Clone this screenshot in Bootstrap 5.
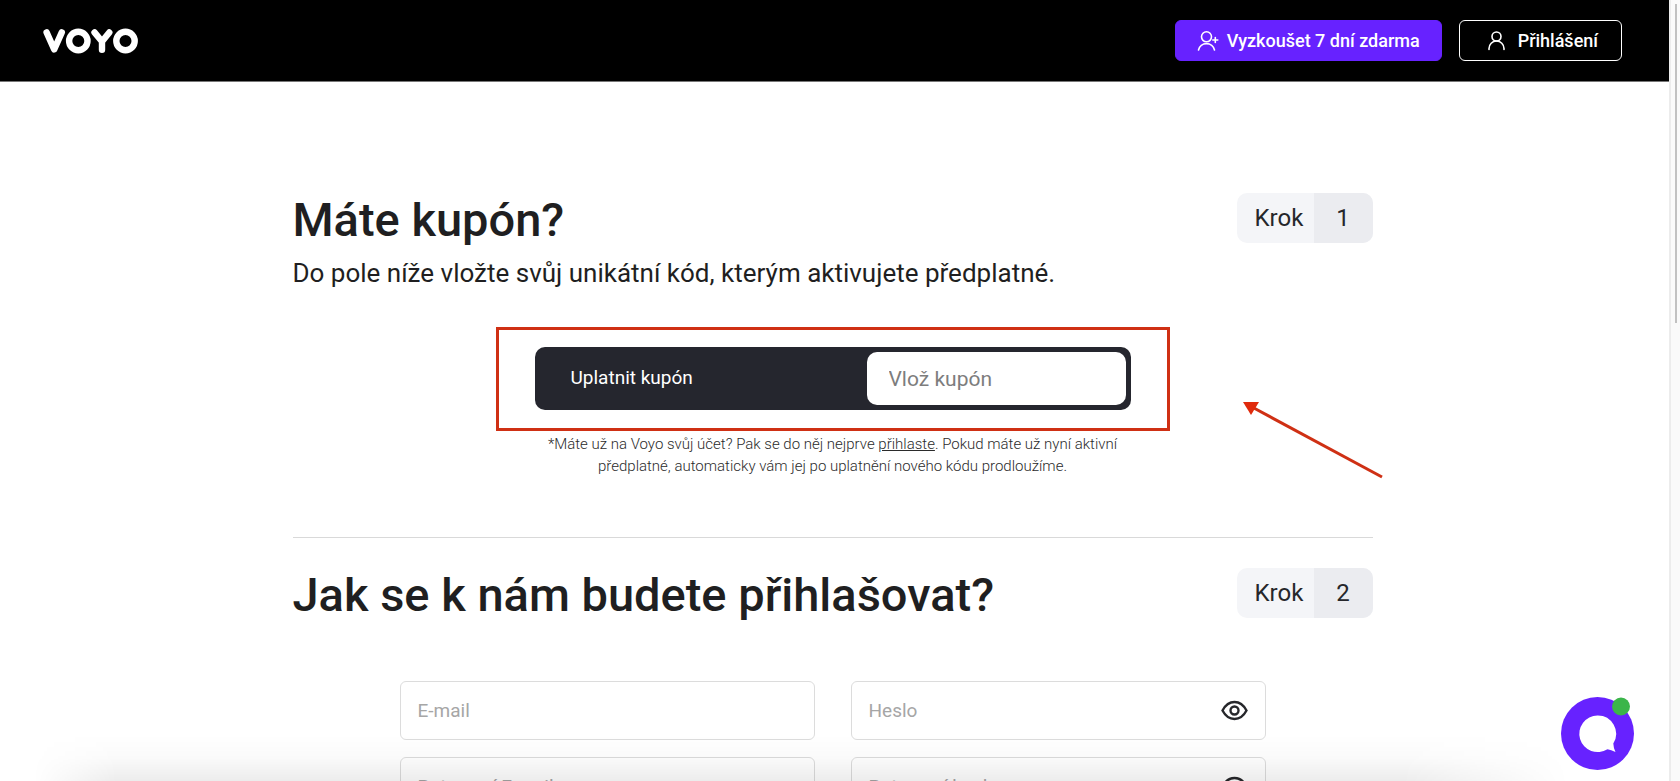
<!DOCTYPE html>
<html lang="cs">
<head>
<meta charset="utf-8">
<meta name="viewport" content="width=device-width, initial-scale=1">
<title>Voyo – Uplatnit kupón</title>
<link href="https://cdn.jsdelivr.net/npm/bootstrap@5.3.0/dist/css/bootstrap.min.css" rel="stylesheet">
<style>
  body { font-family: Roboto, "Liberation Sans", sans-serif; color: #1f1f21; background: #fff; }
  .page-pane { min-width: 0; }
  .scroll-rail { width: 11px; background: #fafafa; border-left: 2px solid #ececec; }
  .scroll-thumb { width: 2px; height: 41%; background: #c1c1c1; }
  .site-header { background: #000; padding: 20px 47px 20px 43px; border-bottom: 1px solid #777; }
  .header-btn { height: 41px; font-size: 18px; line-height: 24px; font-weight: 500; border-radius: 6px; color: #fff; }
  .header-actions { gap: 17px; }
  .btn-trial { background: #6722ff; border-color: #6722ff; padding: 0 21px; gap: 8px; }
  .btn-login { border-color: #fff; padding: 0 23px 0 27px; gap: 11px; }
  .content { max-width: 1080px; padding-top: 111px; }
  h1, h2 { font-size: 47px; line-height: 53px; font-weight: 500; margin: 0; }
  .lead-line { font-size: 26px; line-height: 36px; margin: 9px 0 0; }
  .step { font-size: 24px; line-height: 50px; border-radius: 10px; background: #f4f5f8; color: #26272b; }
  .step-name { width: 77px; padding-left: 18px; }
  .step-no { width: 59px; background: #ebecf0; }
  .callout-frame { width: 674px; border: 3px solid #cf3014; padding: 17px 36px 18px; margin-top: 36px; }
  .coupon { background: #25262e; border-radius: 10px; height: 63px; padding: 5px; }
  .coupon label { color: #fff; font-size: 19px; padding-left: 31px; }
  .coupon .form-control { width: 259px; height: 53px; border: 0; border-radius: 10px; font-size: 21px; padding: 0 22px; }
  .coupon .form-control::placeholder { color: #7d7d7d; }
  .note { font-size: 15px; line-height: 22px; font-weight: 300; width: 600px; margin: 2px 0 0; color: #2b2b2b; }
  .note a { color: inherit; }
  .arrow { top: 208px; right: -11px; width: 142px; height: 78px; }
  .rule { height: 1px; background: #d9d9d9; margin: 60px 0 30px; }
  .account { width: 866px; margin-top: 60px; gap: 17px; }
  .account-row { gap: 36px; }
  .account .form-control { height: 59px; border: 1px solid #dcdcdc; border-radius: 6px; font-size: 19px; padding: 0 17px; background: transparent; }
  .account .form-control::placeholder { color: #a6a6a6; }
  .eye-btn { top: 16px; right: 18px; width: 27px; height: 27px; color: #26272b; }
  .bottom-shade { height: 46px; background: linear-gradient(rgba(0,0,0,0), rgba(0,0,0,.02) 50%, rgba(0,0,0,.075)); -webkit-mask-image: linear-gradient(90deg, transparent 2%, #000 7%, #000 84%, transparent 94%); mask-image: linear-gradient(90deg, transparent 2%, #000 7%, #000 84%, transparent 94%); pointer-events: none; }
  .chat { right: 35px; bottom: 11px; width: 73px; height: 73px; }
</style>
</head>
<body>
<div class="d-flex vh-100 overflow-hidden">
  <div class="page-pane flex-grow-1 position-relative overflow-hidden">
    <header class="site-header d-flex justify-content-between align-items-center">
      <a href="#" aria-label="Voyo" class="d-flex">
        <svg width="95" height="26" viewBox="0 0 95 26" fill="none" stroke="#fff" stroke-width="6.4" stroke-linecap="round" stroke-linejoin="round">
          <path d="M3.6 4.4 11.2 21.4 18.8 4.4"/><circle cx="35.3" cy="13" r="9.2"/>
          <path d="M51.5 4.4 59 13.5 66.3 4.4M59 13.5V21.8"/><circle cx="82.5" cy="13" r="9.2"/>
        </svg>
      </a>
      <div class="header-actions d-flex">
        <button type="button" class="btn header-btn btn-trial d-flex align-items-center">
          <svg width="22" height="20" viewBox="0 0 22 20" fill="none" stroke="#fff" stroke-width="1.6" stroke-linecap="round"><circle cx="9.5" cy="5.8" r="5"/><path d="M1.5 19a8.2 8.2 0 0 1 16 0M15.8 9h5M18.3 6.500v5"/></svg>
          Vyzkoušet 7 dní zdarma
        </button>
        <button type="button" class="btn header-btn btn-login d-flex align-items-center">
          <svg width="20" height="20" viewBox="0 0 20 20" fill="none" stroke="#fff" stroke-width="1.6" stroke-linecap="round"><circle cx="9.5" cy="5.5" r="4.5"/><path d="M2 18.500v-1a7.500 7.500 0 0 1 15 0v1"/></svg>
          Přihlášení
        </button>
      </div>
    </header>

    <div class="pe-1">
    <main class="content mx-auto">
      <section class="position-relative">
        <div class="d-flex justify-content-between align-items-start">
          <div><h1>Máte kupón?</h1><p class="lead-line">Do pole níže vložte svůj unikátní kód, kterým aktivujete předplatné.</p></div>
          <div class="step d-flex overflow-hidden"><span class="step-name">Krok</span><span class="step-no text-center">1</span></div>
        </div>
        <div class="callout-frame mx-auto">
          <div class="coupon d-flex justify-content-between align-items-center">
            <label for="coupon">Uplatnit kupón</label>
            <input id="coupon" type="text" class="form-control" placeholder="Vlož kupón">
          </div>
        </div>
        <p class="note mx-auto text-center">*Máte už na Voyo svůj účet? Pak se do něj nejprve <a href="#">přihlaste</a>. Pokud máte už nyní aktivní předplatné, automaticky vám jej po uplatnění nového kódu prodloužíme.</p>
        <svg class="arrow position-absolute" viewBox="0 0 142 78" aria-hidden="true"><path d="M10 6 140 76" stroke="#cf3014" stroke-width="3"/><path d="M1 1H17L9 14Z" fill="#e02a0c"/></svg>
      </section>
      <div class="rule"></div>
      <section>
        <div class="d-flex justify-content-between align-items-start">
          <h2>Jak se k nám budete přihlašovat?</h2>
          <div class="step d-flex overflow-hidden"><span class="step-name">Krok</span><span class="step-no text-center">2</span></div>
        </div>
        <form class="account d-flex flex-column mx-auto">
          <div class="d-flex account-row">
            <div class="flex-fill"><input type="email" class="form-control" placeholder="E-mail" aria-label="E-mail"></div>
            <div class="flex-fill position-relative"><input type="password" class="form-control" placeholder="Heslo" aria-label="Heslo">
              <button type="button" class="eye-btn btn p-0 border-0 position-absolute d-flex" aria-label="Zobrazit heslo"><svg width="27" height="27" viewBox="0 0 27 27" fill="none" stroke="currentColor" stroke-width="2.4"><path d="M1.500 13.500Q6 5 13.500 5T25.500 13.500Q21 22 13.500 22T1.500 13.500Z"/><circle cx="13.500" cy="13.500" r="4"/></svg></button></div>
          </div>
          <div class="d-flex account-row">
            <div class="flex-fill"><input type="email" class="form-control" placeholder="Potvrzení E-mailu" aria-label="Potvrzení E-mailu"></div>
            <div class="flex-fill position-relative"><input type="password" class="form-control" placeholder="Potvrzení hesla" aria-label="Potvrzení hesla">
              <button type="button" class="eye-btn btn p-0 border-0 position-absolute d-flex" aria-label="Zobrazit heslo"><svg width="27" height="27" viewBox="0 0 27 27" fill="none" stroke="currentColor" stroke-width="2.4"><path d="M1.500 13.500Q6 5 13.500 5T25.500 13.500Q21 22 13.500 22T1.500 13.500Z"/><circle cx="13.500" cy="13.500" r="4"/></svg></button></div>
          </div>
        </form>
      </section>
    </main>
    </div>
    <div class="bottom-shade position-absolute bottom-0 start-0 end-0"></div>
    <button type="button" class="chat btn p-0 border-0 position-absolute" aria-label="Otevřít chat">
      <svg class="d-block" width="73" height="73" viewBox="0 0 73 73"><circle cx="36.5" cy="36.5" r="36.5" fill="#6722ff"/><path d="M36.500 18.500a18.300 18.300 0 1 0 10 33.700Q50 53 54.500 55 52.500 51 52.300 46.500A18.300 18.300 0 0 0 36.500 18.500Z" fill="#fff"/><circle cx="60" cy="9.500" r="9" fill="#3bb54a"/></svg>
    </button>
  </div>
  <div class="scroll-rail d-flex justify-content-center pt-1" aria-hidden="true"><div class="scroll-thumb"></div></div>
</div>
<script src="https://cdn.jsdelivr.net/npm/bootstrap@5.3.0/dist/js/bootstrap.bundle.min.js"></script>
</body>
</html>
